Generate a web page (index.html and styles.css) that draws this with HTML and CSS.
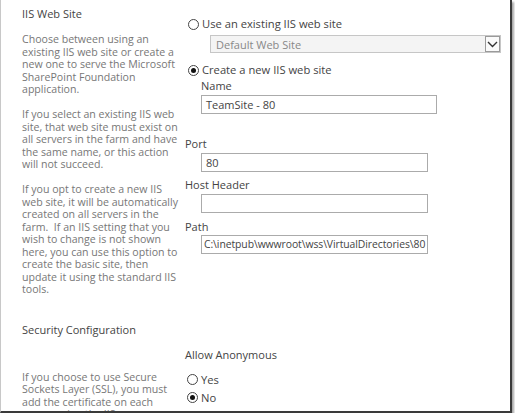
FILE: index.html
```html
<!DOCTYPE html>
<html>
<head>
<meta charset="utf-8">
<link rel="stylesheet" href="styles.css">
</head>
<body>
<div class="frame">
  <div class="section">
    <div class="desc-col">
      <div class="heading">IIS Web Site</div>
      <p class="desc first">Choose between using an<br>existing IIS web site or create a<br>new one to serve the Microsoft<br>SharePoint Foundation<br>application.</p>
      <p class="desc">If you select an existing IIS web<br>site, that web site must exist on<br>all servers in the farm and have<br>the same name, or this action<br>will not succeed.</p>
      <p class="desc">If you opt to create a new IIS<br>web site, it will be automatically<br>created on all servers in the<br>farm.&nbsp; If an IIS setting that you<br>wish to change is not shown<br>here, you can use this option to<br>create the basic site, then<br>update it using the standard IIS<br>tools.</p>
    </div>
    <div class="field-col">
      <div class="radio-row r-existing"><span class="radio"></span><span>Use an existing IIS web site</span></div>
      <div class="select"><span class="select-text">Default Web Site</span><span class="select-btn"><svg width="11" height="7" viewBox="0 0 11 7"><path d="M1 1 L5.5 5.5 L10 1" fill="none" stroke="#333" stroke-width="1.4"/></svg></span></div>
      <div class="radio-row r-new"><span class="radio checked"></span><span>Create a new IIS web site</span></div>
      <div class="label indent">Name</div>
      <div class="input wide indent">TeamSite - 80</div>
      <div class="label l-port">Port</div>
      <div class="input indent">80</div>
      <div class="label l-host">Host Header</div>
      <div class="input indent"></div>
      <div class="label l-path">Path</div>
      <div class="input indent i-path">C:\inetpub\wwwroot\wss\VirtualDirectories\80</div>
    </div>
  </div>
  <div class="section sec2">
    <div class="desc-col">
      <div class="heading">Security Configuration</div>
      <p class="desc sec-desc">If you choose to use Secure<br>Sockets Layer (SSL), you must<br>add the certificate on each<br>server using the IIS</p>
    </div>
    <div class="field-col">
      <div class="label l-anon">Allow Anonymous</div>
      <div class="radio-row r-yes"><span class="radio"></span><span>Yes</span></div>
      <div class="radio-row r-no"><span class="radio checked"></span><span>No</span></div>
    </div>
  </div>
</div>
</body>
</html>
```
FILE: styles.css
```css
html, body {
  margin: 0;
  padding: 0;
  background: #ffffff;
}
body {
  font-family: "Segoe UI", "Open Sans", "Noto Sans", sans-serif;
  color: #444;
}
.frame {
  width: 509px;
  height: 411px;
  border-left: 1px solid #c8c8c8;
  border-right: 2px solid #3a3a3a;
  border-bottom: 2px solid #3a3a3a;
  box-shadow: 2px 2px 2px rgba(0,0,0,0.35);
  overflow: hidden;
  background: #fff;
}
.section {
  display: flex;
}
.desc-col {
  width: 163px;
  padding-left: 21px;
  flex: none;
}
.field-col {
  flex: 1;
  padding-top: 16px;
}
.heading {
  font-size: 11px;
  line-height: 16px;
  color: #444;
  padding-top: 6px;
}
.desc {
  font-size: 10.6px;
  line-height: 12.5px;
  color: #777;
  margin: 12.5px 0 0 0;
  white-space: nowrap;
}
.desc.first {
  margin-top: 11px;
}
.radio-row {
  display: flex;
  align-items: center;
  font-size: 11.2px;
  line-height: 16px;
  color: #444;
  margin-left: 3px;
}
.radio {
  width: 11px;
  height: 11px;
  border: 1px solid #444;
  border-radius: 50%;
  box-sizing: border-box;
  margin-right: 3px;
  display: flex;
  align-items: center;
  justify-content: center;
}
.radio.checked::after {
  content: "";
  width: 5px;
  height: 5px;
  border-radius: 50%;
  background: #111;
}
.select {
  margin: 3px 0 0 25px;
  width: 291px;
  height: 18px;
  box-sizing: border-box;
  border: 1px solid #c6c6c6;
  background: #f4f4f4;
  display: flex;
  align-items: center;
  justify-content: space-between;
  font-size: 11px;
  color: #888;
}
.select-text {
  padding-left: 5px;
}
.select-btn {
  width: 15px;
  height: 16px;
  box-sizing: border-box;
  border: 1px solid #9a9a9a;
  background: #fafafa;
  display: flex;
  align-items: center;
  justify-content: center;
}
.r-new {
  margin-top: 9px;
}
.label {
  font-size: 11px;
  line-height: 16px;
  color: #444;
}
.indent {
  margin-left: 16px;
}
.input {
  margin-top: 1px;
  width: 227px;
  height: 19px;
  box-sizing: border-box;
  border: 1px solid #ababab;
  font-size: 11px;
  line-height: 17px;
  padding-left: 4px;
  color: #444;
  white-space: nowrap;
  overflow: hidden;
}
.input.wide {
  width: 236px;
}
.l-port { margin-top: 22px; }
.l-host { margin-top: 5px; }
.l-path { margin-top: 6px; }
.i-path { margin-top: 0; padding-left: 2px; font-size: 10.4px; letter-spacing: -0.08px; }
.sec2 .heading { padding-top: 0; }
.sec2 { margin-top: 26px; }
.sec2 .field-col { padding-top: 25px; }
.sec-desc { margin-top: 33px; }
.r-yes { margin-top: 9px; margin-left: 2px; }
.r-no { margin-top: 2px; margin-left: 2px; }
```
